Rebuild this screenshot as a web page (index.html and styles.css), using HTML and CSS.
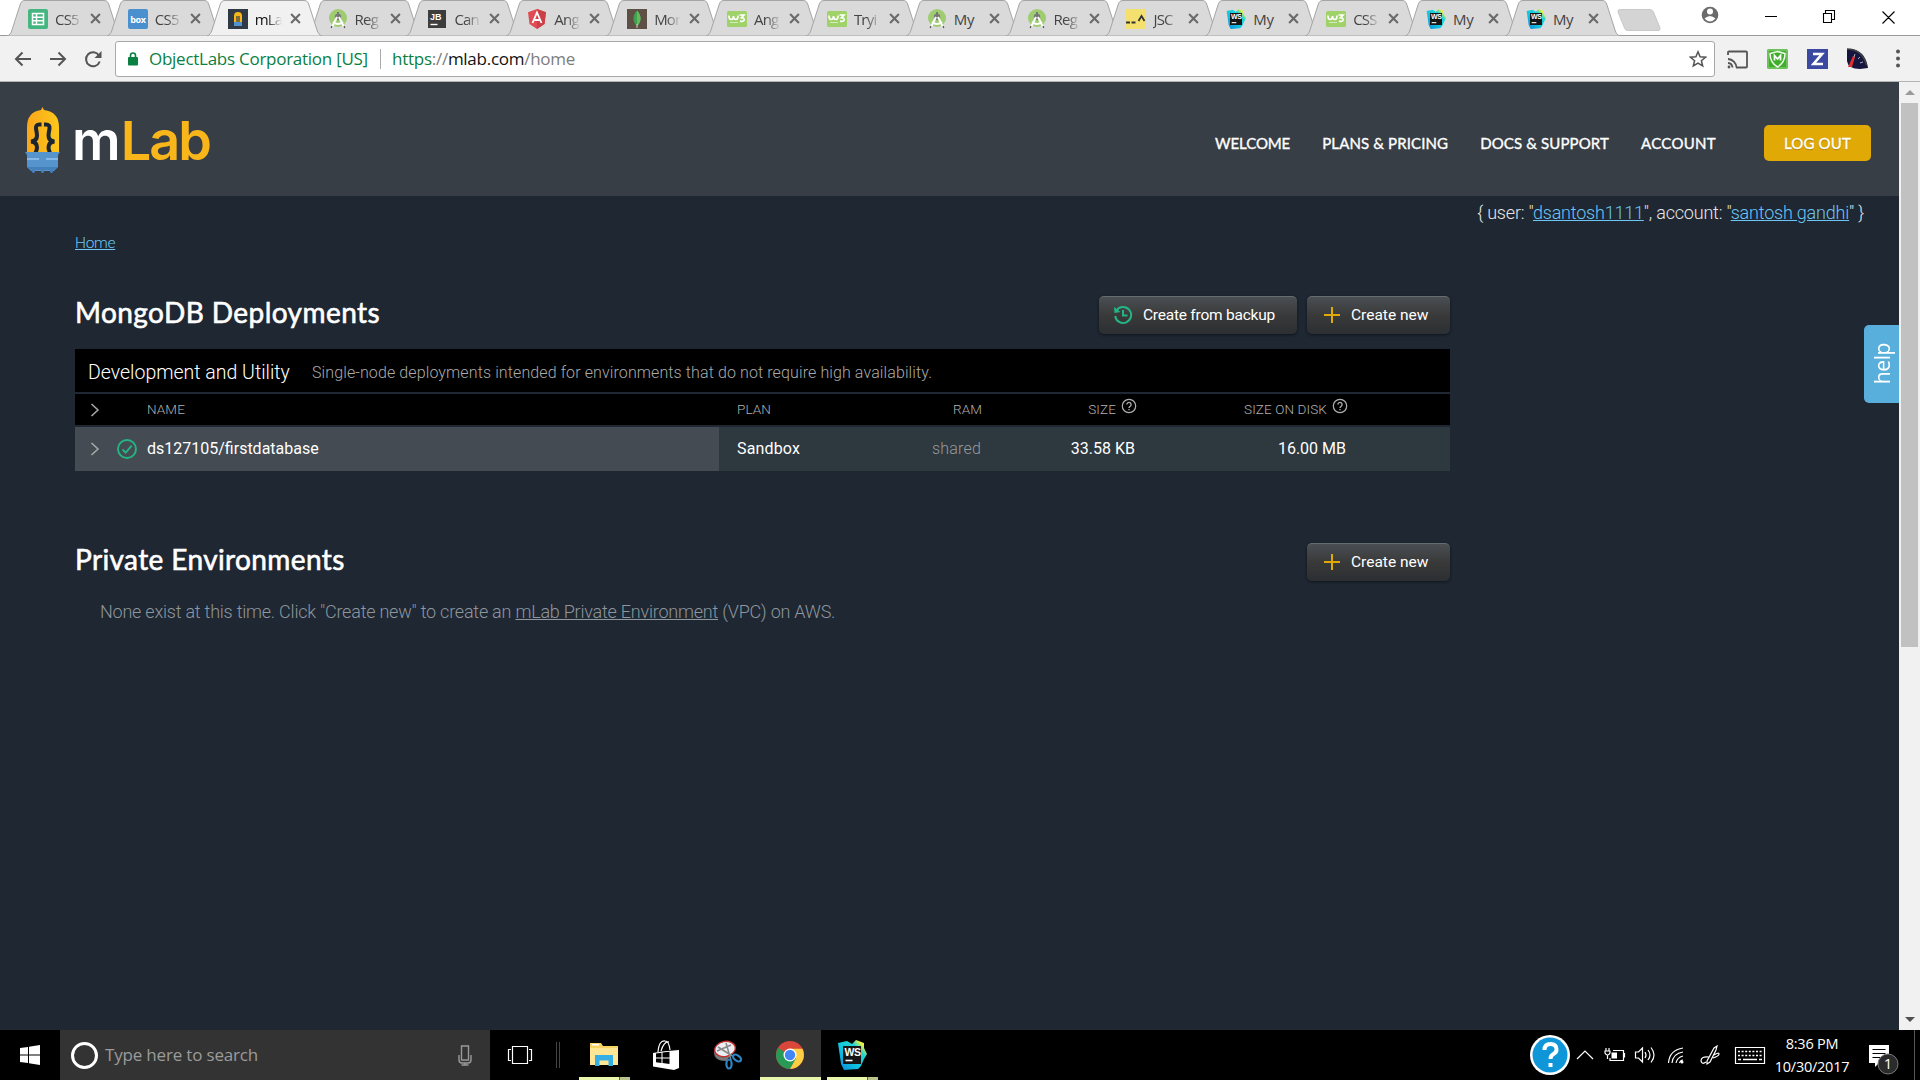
FILE: index.html
```html
<!DOCTYPE html>
<html lang="en">
<head>
<meta charset="utf-8">
<title>mLab</title>
<link rel="stylesheet" href="styles.css">
</head>
<body>
<svg class="defs" width="0" height="0">
  <defs>
    <linearGradient id="bulb" x1="0" x2="1"><stop offset="0" stop-color="#faa61a"/><stop offset="1" stop-color="#fdc81b"/></linearGradient>
    <linearGradient id="wsg" x1="0" y1="1" x2="1" y2="0"><stop offset="0" stop-color="#0a84d8"/><stop offset=".4" stop-color="#0fc4e0"/><stop offset=".7" stop-color="#22d6d4"/><stop offset=".85" stop-color="#f6f13c"/><stop offset="1" stop-color="#22d6d4"/></linearGradient>
    <symbol id="tab" viewBox="0 0 116 36"><path d="M0 36 C3 35 4 33 5 30 L13 5 C14 2 15 .5 18 .5 H97 C100 .5 101 2 102 5 L110 30 C111 33 112 35 115 36Z"/></symbol>
    <symbol id="x" viewBox="0 0 10 10"><path d="M1 1 9 9M9 1 1 9" fill="none" stroke="currentColor" stroke-width="1.9"/></symbol>
    <symbol id="sheets" viewBox="0 0 20 20"><rect width="20" height="20" rx="2" fill="#45b680"/><path d="M4.500 4.500h11v11h-11zM4.500 8.200h11M4.500 11.800h11M8.500 4.500v11" fill="none" stroke="#fff" stroke-width="1.500"/></symbol>
    <symbol id="box" viewBox="0 0 20 20"><rect width="20" height="20" rx="2" fill="#4a90cf"/><text x="10" y="13.500" text-anchor="middle" class="i-box">box</text></symbol>
    <symbol id="mlab" viewBox="0 0 20 20"><rect width="20" height="20" fill="#303a45"/><path d="M6 13V7a4 4 0 0 1 8 0v6z" fill="#f9b61b"/><path d="M9 13V7M11 13V7" stroke="#303a45" stroke-width="1.200"/><path d="M6 13h8v4H6z" fill="#4f93d0"/></symbol>
    <symbol id="studio" viewBox="0 0 20 20"><circle cx="10" cy="9" r="9" fill="#9fcc70"/><circle cx="10" cy="8" r="3.200" fill="#777"/><path d="M10 3v3" stroke="#777" stroke-width="2"/><path d="M9 8 4 18M11 8l5 10M5 13q5 4 10 0" fill="none" stroke="#fff" stroke-width="2"/><path d="M4 17l-.8 2M16 17l.8 2" stroke="#555" stroke-width="1.300"/></symbol>
    <symbol id="jb" viewBox="0 0 20 20"><rect x="1" y="1" width="18" height="18" fill="#3d3d3d"/><text x="3" y="10.500" class="i-jb">JB</text><path d="M3.500 15.500h7" stroke="#fff" stroke-width="1.400"/></symbol>
    <symbol id="ng" viewBox="0 0 20 20"><path d="M10 0 19 3.200 17.500 15 10 20 2.500 15 1 3.200z" fill="#e04a52"/><path d="M10 0 19 3.200 17.500 15 10 20z" fill="#cc3e48"/><path d="M5.500 14 10 3.500 14.500 14M7.500 11h5" fill="none" stroke="#fff" stroke-width="1.800"/></symbol>
    <symbol id="mongo" viewBox="0 0 20 20"><rect width="20" height="20" fill="#5f5045"/><path d="M10 1.500C15 7 14.500 13 10 17 5.500 13 5 7 10 1.500z" fill="#3fa34d"/><path d="M10 1.500C15 7 14.500 13 10 17z" fill="#69b85f"/><path d="M10 15v4" stroke="#ccc"/></symbol>
    <symbol id="w3" viewBox="0 0 20 20"><rect y="2" width="20" height="16" rx="1.500" fill="#a0d26a"/><path d="M2 6.500q0 4 2.200 4t2.300-3.500q.1 3.500 2.300 3.500T11 6.500M12.500 6H17l-2.600 2.700q3 .1 2.800 2.200-.6 2.200-4.200 1.200" fill="none" stroke="#fff" stroke-width="1.700"/><path d="M3 13.500h8" stroke="#d5ebbd"/></symbol>
    <symbol id="jsc" viewBox="0 0 20 20"><rect width="20" height="20" fill="#f4e06e"/><path d="M0 13.500h4M5.500 13.500h4M12.500 12l3-5 3 5" fill="none" stroke="#333" stroke-width="1.800"/></symbol>
    <symbol id="ws" viewBox="0 0 30 30"><path d="M1 3 10 1l5 3 4-4 8 3v5l3 6-3 5-3 7-3 3-14 1-3-6z" fill="url(#wsg)"/><path d="M6 6h18v18H6z" fill="#161616"/><text x="7.500" y="15.500" class="i-ws">WS</text><path d="M8.500 20.500h7" stroke="#fff" stroke-width="1.600"/></symbol>
    <symbol id="q" viewBox="0 0 16 16"><circle cx="8" cy="8" r="6.700" fill="none" stroke="currentColor" stroke-width="1.200"/><path d="M5.900 6.500a2.100 2.100 0 1 1 3.300 1.700Q8 9 8 10M8 11v1.200" fill="none" stroke="currentColor" stroke-width="1.300"/></symbol>
    <symbol id="chev" viewBox="0 0 9 14"><path d="M1 1l6.500 6L1 13" fill="none" stroke="currentColor" stroke-width="1.500"/></symbol>
    <symbol id="plus" viewBox="0 0 18 18"><path d="M9 1v16M1 9h16" stroke="#e1a905" stroke-width="2"/></symbol>
  </defs>
</svg>
<header class="tabs">
  <div class="strip">
    <div class="tab"><svg class="shape"><use href="#tab"/></svg><svg class="fav"><use href="#sheets"/></svg><span>CS5</span><svg class="close"><use href="#x"/></svg></div>
    <div class="tab"><svg class="shape"><use href="#tab"/></svg><svg class="fav"><use href="#box"/></svg><span>CS5</span><svg class="close"><use href="#x"/></svg></div>
    <div class="tab active"><svg class="shape"><use href="#tab"/></svg><svg class="fav"><use href="#mlab"/></svg><span>mLa</span><svg class="close"><use href="#x"/></svg></div>
    <div class="tab"><svg class="shape"><use href="#tab"/></svg><svg class="fav"><use href="#studio"/></svg><span>Reg</span><svg class="close"><use href="#x"/></svg></div>
    <div class="tab"><svg class="shape"><use href="#tab"/></svg><svg class="fav"><use href="#jb"/></svg><span>Can</span><svg class="close"><use href="#x"/></svg></div>
    <div class="tab"><svg class="shape"><use href="#tab"/></svg><svg class="fav"><use href="#ng"/></svg><span>Ang</span><svg class="close"><use href="#x"/></svg></div>
    <div class="tab"><svg class="shape"><use href="#tab"/></svg><svg class="fav"><use href="#mongo"/></svg><span>Mon</span><svg class="close"><use href="#x"/></svg></div>
    <div class="tab"><svg class="shape"><use href="#tab"/></svg><svg class="fav"><use href="#w3"/></svg><span>Ang</span><svg class="close"><use href="#x"/></svg></div>
    <div class="tab"><svg class="shape"><use href="#tab"/></svg><svg class="fav"><use href="#w3"/></svg><span>Tryi</span><svg class="close"><use href="#x"/></svg></div>
    <div class="tab"><svg class="shape"><use href="#tab"/></svg><svg class="fav"><use href="#studio"/></svg><span class="full">My</span><svg class="close"><use href="#x"/></svg></div>
    <div class="tab"><svg class="shape"><use href="#tab"/></svg><svg class="fav"><use href="#studio"/></svg><span>Reg</span><svg class="close"><use href="#x"/></svg></div>
    <div class="tab"><svg class="shape"><use href="#tab"/></svg><svg class="fav"><use href="#jsc"/></svg><span>JSC</span><svg class="close"><use href="#x"/></svg></div>
    <div class="tab"><svg class="shape"><use href="#tab"/></svg><svg class="fav"><use href="#ws"/></svg><span class="full">My</span><svg class="close"><use href="#x"/></svg></div>
    <div class="tab"><svg class="shape"><use href="#tab"/></svg><svg class="fav"><use href="#w3"/></svg><span>CSS</span><svg class="close"><use href="#x"/></svg></div>
    <div class="tab"><svg class="shape"><use href="#tab"/></svg><svg class="fav"><use href="#ws"/></svg><span class="full">My</span><svg class="close"><use href="#x"/></svg></div>
    <div class="tab"><svg class="shape"><use href="#tab"/></svg><svg class="fav"><use href="#ws"/></svg><span class="full">My</span><svg class="close"><use href="#x"/></svg></div>
  </div>
  <svg class="newtab" viewBox="0 0 44 22"><path d="M3 .5H33Q35.500.5 36.500 3L43 19Q43.500 21.500 41 21.500H11Q8.500 21.500 7.500 19L1 3Q.5.500 3 .5Z" fill="#d4d4d4" stroke="#c8c8c8"/></svg>
  <svg class="win" viewBox="0 0 220 30"><circle cx="10" cy="15" r="8.300" fill="#6b6b6b"/><circle cx="10" cy="11.500" r="3" fill="#fff"/><path d="M4.500 18.500q5.500-5 11 0-5.500 6-11 0z" fill="#fff"/><path d="M65 16.500h12M123.500 13.500h8v9h-8zM125.500 13v-2.500h9v9h-2.500M182.500 11.500l12 12M194.500 11.500l-12 12" fill="none" stroke="#000" stroke-width="1.100"/></svg>
</header>
<div class="toolbar">
  <svg class="nav" viewBox="0 0 100 24"><path d="M17 12H2M8.500 5.500 2 12l6.500 6.500M36 12h15M44.500 5.500 51 12l-6.500 6.500M85 8.500a7 7 0 1 0 .7 6" fill="none" stroke="#555" stroke-width="2"/><path d="M87.500 4v7h-7z" fill="#555"/></svg>
  <div class="omni">
    <svg class="lock" viewBox="0 0 12 14"><rect x="1" y="5" width="10" height="8.500" rx="1" fill="#0b8043"/><path d="M3.500 6V3.500a2.500 2.500 0 0 1 5 0V6" fill="none" stroke="#0b8043" stroke-width="1.600"/></svg>
    <span class="org">ObjectLabs Corporation [US]</span>
    <i class="bar"></i>
    <span class="url"><span class="g">https</span>://<span class="k">mlab.com</span>/home</span>
    <svg class="star" viewBox="0 0 18 18"><path d="M9 1.800l2.100 5 5.400.4-4.100 3.500 1.300 5.300L9 13.100 4.300 16l1.300-5.300L1.500 7.200l5.400-.4z" fill="none" stroke="#555" stroke-width="1.500"/></svg>
  </div>
  <svg class="ext" viewBox="0 0 190 24"><path d="M10 20.500h10a1 1 0 0 0 1-1v-14a1 1 0 0 0-1-1H3a1 1 0 0 0-1 1V8M2 12a9 9 0 0 1 8.500 8.500M2 16a5 5 0 0 1 4.500 4.500" fill="none" stroke="#555" stroke-width="1.800"/><circle cx="3" cy="20" r="1.400" fill="#555"/>
    <rect x="41" y="2" width="21" height="20" rx="2" fill="#3fae2a"/><rect x="42" y="3" width="19" height="18" rx="1" fill="none" stroke="#9ad68a"/><path d="M51.500 4.500 59 6.500q0 9-7.500 13.500Q44 15.500 44 6.500z" fill="#3fae2a" stroke="#f2faf0" stroke-width="1.500"/><path d="M48.500 13.500V8.500l3 3.500 3-3.500v5" fill="none" stroke="#fff" stroke-width="1.700"/>
    <rect x="81" y="2" width="21" height="20" fill="#3b4aa0"/><path d="M87 7h9l-8.500 10H97" fill="none" stroke="#fff" stroke-width="2.600"/>
    <path d="M121 2q18-1 21 19l-8 1q-12 0-13-8z" fill="#15153f"/><path d="M121 2q15 0 19.500 16" fill="none" stroke="#444" stroke-width="1.500"/><path d="M122 20l5-11 2 1-3 10z" fill="#e03030"/><path d="M129 7l-1 3M134 10l-2 2M137 15l-3 1" stroke="#aab"/>
    <g fill="#555"><circle cx="172" cy="4.500" r="2"/><circle cx="172" cy="11.500" r="2"/><circle cx="172" cy="18.500" r="2"/></g></svg>
</div>
<div class="view">
  <main class="page">
    <div class="head">
      <svg class="bulb" viewBox="0 0 36 68"><path d="M2 46V20Q2 5 16 3l1.500-3L19 3q15 2 15 17v26z" fill="url(#bulb)"/><path d="M16.500 17.500h-2q-4 0-3.500 4 .8 4 1 7 0 5.500-6 6 6 .5 6 6 0 2-1.500 5.500M19 17.500h2q4 0 3.500 4-.8 4-1 7 0 5.500 6 6-6 .5-6 6 0 2 1.500 5.500" fill="none" stroke="#1b2631" stroke-width="4"/><path d="M0 45h35l-2 3v12l-4 4H6l-4-4V48z" fill="#5594cc"/><path d="M2 60h31l-4 3h-1v2q-1.500 2-3 0v-2h-6v2q-1.500 2-3 0v-2h-6v2q-1.500 2-3 0v-2H6z" fill="#4580bb"/><path d="M2 52h12M21 52h12" stroke="#87b9e6" stroke-width="2"/></svg>
      <div class="logo"><span>m</span><b>Lab</b></div>
      <nav><a class="n1">WELCOME</a><a>PLANS &amp; PRICING</a><a>DOCS &amp; SUPPORT</a><a class="n4">ACCOUNT</a></nav>
      <a class="logout">LOG OUT</a>
    </div>
    <div class="who"><span>{ user: "<a>dsantosh1111</a>", account: "<a>santosh gandhi</a>" }</span></div>
    <div class="body">
      <div class="crumb"><a>Home</a></div>
      <div class="title first"><h1>MongoDB Deployments</h1>
        <button class="btn bk"><svg viewBox="0 0 20 20"><path d="M3.500 5.500a8 8 0 1 1-1.300 5.500M10 5v5.500h4.500" fill="none" stroke="#23b684" stroke-width="2"/><path d="M1 2l.5 6 6-1z" fill="#23b684"/></svg><span>Create from backup</span></button>
        <button class="btn"><svg viewBox="0 0 18 18"><use href="#plus"/></svg><span>Create new</span></button></div>
      <section class="table">
        <div class="cap"><span class="t1">Development and Utility</span><span class="t2">Single-node deployments intended for environments that do not require high availability.</span></div>
        <div class="row th"><div class="name"><svg class="chev"><use href="#chev"/></svg><i class="ok"></i><span>NAME</span></div><div class="plan"><span>PLAN</span></div><div class="r"><span>RAM</span></div><div class="r"><span>SIZE</span><svg class="q"><use href="#q"/></svg></div><div class="r"><span>SIZE ON DISK</span><svg class="q"><use href="#q"/></svg></div></div>
        <div class="row td"><div class="name"><svg class="chev"><use href="#chev"/></svg><svg class="ok" viewBox="0 0 20 20"><circle cx="10" cy="10" r="9" fill="none" stroke="#23b684" stroke-width="1.900"/><path d="M5.500 10.500l3.200 3.200 6-7" fill="none" stroke="#23b684" stroke-width="1.900"/></svg><span>ds127105/firstdatabase</span></div><div class="plan"><span>Sandbox</span></div><div class="r dim"><span>shared</span></div><div class="r"><span>33.58 KB</span></div><div class="r"><span>16.00 MB</span></div></div>
      </section>
      <div class="title second"><h1>Private Environments</h1>
        <button class="btn"><svg viewBox="0 0 18 18"><use href="#plus"/></svg><span>Create new</span></button></div>
      <p class="none"><span>None exist at this time. Click "Create new" to create an <a>mLab Private Environment</a> (VPC) on AWS.</span></p>
    </div>
    <div class="help"><span>help</span></div>
  </main>
  <div class="scroll"><i class="up"></i><i class="thumb"></i><i class="down"></i></div>
</div>
<footer class="task">
  <svg class="start" viewBox="0 0 20 20"><path d="M0 3l8-1.100V9.500H0zM9 1.700 20 0v9.500H9zM0 10.500h8v7.600L0 17zM9 10.500h11V20L9 18.300z" fill="#fff"/></svg>
  <div class="search"><i class="cortana"></i><span>Type here to search</span><svg viewBox="0 0 14 21"><path d="M3.500 1h7v14h-7zM1 10v5q0 3 3 3h6q3 0 3-3v-5M7 18v2M3.500 20h7" fill="none" stroke="#999" stroke-width="1.400"/></svg></div>
  <svg class="apps" viewBox="490 1030 400 50">
    <path d="M512.500 1046.500h15v17h-15zM511 1049.500h-2.500v11h2.500M529 1049.500h2.500v11H529" fill="none" stroke="#fff" stroke-width="1.200"/>
    <path d="M556.500 1042v26M559.500 1042v26" stroke="#444"/>
    <path d="M590 1043h11l2 3h15v19h-28z" fill="#f8d364"/><path d="M590 1048h28v17h-28z" fill="#ffe694"/><path d="M592 1044h7v1.500h-7z" fill="#fff"/><path d="M595 1066v-11h18v11h-4.500v-5.500h-9v5.500z" fill="#35ade5"/>
    <path d="M653 1053l9-1.500 17-1.500v18l-5 2-21-3.500z" fill="#fff"/><path d="M658 1052q1-12 7-11 4 0 5 9M661 1051q3-10 8-9" fill="none" stroke="#fff" stroke-width="1.200"/><path d="M656 1053.500l5.500-.7v4.700H656zM662.500 1052.600l7-.8v5.700h-7zM656 1058.500h5.500v4.500l-5.500-.7zM662.500 1058.500h7v5.400l-7-.8z" fill="#000"/>
    <path d="M714 1052q0 9 12 9l6-7z" fill="#777"/><ellipse cx="725" cy="1049" rx="10.500" ry="7.500" fill="#eceef4" stroke="#c0302c" stroke-width="1.400" transform="rotate(-12 725 1049)"/><path d="M718 1047l16 10M726 1043l5 17M717 1051l14-6" stroke="#888" stroke-width="1.500"/><g fill="none" stroke="#2e86c6" stroke-width="2.200"><ellipse cx="729" cy="1064" rx="2.600" ry="4.500"/><ellipse cx="737" cy="1058" rx="4.500" ry="2.600" transform="rotate(35 737 1058)"/></g>
    <path d="M760 1030h61v50h-61z" fill="#333"/>
    <circle cx="790" cy="1055" r="14" fill="#d8473a"/><path d="M777.900 1048A14 14 0 0 0 790 1069l6.500-10.500-6.500-3.500z" fill="#279b56"/><path d="M777.900 1048l6 11 6 3z" fill="#279b56"/><path d="M790 1069A14 14 0 0 0 802.500 1048.800H790l6 9.500z" fill="#fcce44"/><circle cx="790" cy="1055" r="6.500" fill="#fff"/><circle cx="790" cy="1055" r="5.200" fill="#4285f4"/>
    <svg x="837" y="1040" width="30" height="30"><use href="#ws"/></svg>
    <path d="M579 1077h40v3h-40zM760 1077h61v3h-61zM827 1077h40v3h-40z" fill="#e9f7ad"/><path d="M619.500 1077H630v3h-10.500zM867.500 1077H878v3h-10.500z" fill="#b9c38b"/>
  </svg>
  <svg class="tray" viewBox="1528 1030 240 50">
    <circle cx="1550" cy="1055" r="20" fill="#fff"/><circle cx="1550" cy="1055" r="17.500" fill="#0f96d8"/><path d="M1544.500 1050q0-6 6-6t6 5.500q0 3-3 4.500t-3 5M1550.500 1063v4" fill="none" stroke="#fff" stroke-width="4"/>
    <g fill="none" stroke="#fff" stroke-width="1.200"><path d="M1577 1059l8-8 8 8"/><path d="M1613 1050.500h10.500v10H1610v-2.500M1624.500 1053v4.500M1606 1048v3M1609 1048v3M1605 1051h5v2q-1 2-2.500 2t-2.500-2zM1607.500 1055v4"/><path d="M1635.500 1052h3l4-4v14l-4-4h-3zM1645 1052q2 3 0 6M1648 1050q4 5 0 10M1651 1047.500q6 7.500 0 15"/><path d="M1668.500 1063q1-13 14.500-15M1672 1063q1-9.500 11-11M1676 1063q1-5.500 7-7M1679.500 1063q1-3 3.500-3"/><path d="M1707 1061l7-13 3-2-1 4-6 12-3 2zM1709 1057q-8-1-8 4 1 4 5 1M1714 1055q5-3 5-1t-6 4"/><path d="M1735.500 1047.500h29v16h-29z"/></g><circle cx="1682" cy="1062" r="1.500" fill="#fff"/><path d="M1611.500 1052.500h5.500v6h-5.500z" fill="#fff"/><path d="M1738 1051.500h24M1738 1055.500h24" stroke="#fff" stroke-width="1.300" stroke-dasharray="2 1.600"/><path d="M1738 1059.500h3M1743 1059.500h14M1759 1059.500h3" stroke="#fff" stroke-width="1.300"/>
  </svg>
  <div class="clock"><span>8:36 PM</span><span>10/30/2017</span></div>
  <svg class="action" viewBox="1865 1030 55 50"><path d="M1869 1045h20v18h-10l-4 4v-4h-6z" fill="#fff"/><path d="M1872.500 1049.500h13M1872.500 1053.500h13M1872.500 1057.500h13" stroke="#000" stroke-width="1.200"/><circle cx="1888" cy="1064" r="10" fill="#2b2b2b" stroke="#777"/><text x="1888" y="1069" text-anchor="middle" class="i-n">1</text><path d="M1914.500 1030v50" stroke="#555"/></svg>
</footer>
</body>
</html>
```

FILE: styles.css
```css
* { box-sizing: border-box; }
body { margin: 0; width: 1920px; height: 1080px; overflow: hidden; display: flex; flex-direction: column; background: #1e2732; font-family: Roboto, sans-serif; }
.defs { position: absolute; }
svg { display: block; flex: none; }
span, a, button, h1 { white-space: nowrap; }
.i-box { font: 700 9px "Open Sans", sans-serif; fill: #fff; letter-spacing: -.3px; }
.i-jb { font: 700 9px "Liberation Sans", sans-serif; fill: #fff; }
.i-ws { font: 700 10.500px "Liberation Sans", sans-serif; fill: #fff; letter-spacing: -.5px; }
.i-n { font: 15px "Open Sans", sans-serif; fill: #fff; }

/* browser tabs and toolbar */
.tabs { flex: none; height: 36px; display: flex; align-items: flex-start; background: #fff; border-bottom: 1px solid #999; }
.strip { display: flex; width: 1617px; padding-left: 7px; }
.tab { flex: none; position: relative; width: 99.870px; height: 36px; display: flex; align-items: center; padding: 2px 0 0 21px; color: #444; }
.shape { position: absolute; left: 0; top: 0; width: 116px; height: 36px; fill: #dadada; stroke: #a5a5a5; }
.active { z-index: 1; color: #111; }
.active .shape { fill: #f1f1f1; }
.fav { position: relative; width: 20px; height: 20px; }
.tab span { position: relative; width: 30px; margin-left: 7px; font: 15px/22px "Open Sans", sans-serif; letter-spacing: -.8px; mask-image: linear-gradient(90deg, #000 40%, transparent 90%); }
.tab .full { mask-image: none; letter-spacing: -.3px; }
.close { position: relative; width: 11px; height: 11px; margin: -1px 0 0 5px; color: #6a6a6a; }
.newtab { width: 44px; height: 22px; margin-top: 9px; }
.win { width: 220px; height: 30px; margin-left: 39px; }
.toolbar { flex: none; height: 46px; display: flex; align-items: center; background: #f1f1f1; border-bottom: 1px solid #b3b3b3; }
.nav { width: 100px; height: 24px; margin-left: 14px; }
.omni { width: 1600px; height: 36px; margin-left: 1px; display: flex; align-items: center; background: #fff; border: 1px solid #a9a9a9; border-radius: 3px; font: 17px/24px "Open Sans", sans-serif; letter-spacing: -.265px; color: #7d7d7d; }
.lock { width: 12px; height: 14px; margin: 0 10px 0 11px; }
.org { width: 231px; color: #0b8043; }
.bar { width: 1px; height: 20px; background: #aaa; margin-right: 11px; }
.g { color: #0b8043; }
.k { color: #111; }
.star { width: 18px; height: 18px; margin-left: auto; margin-right: 7px; }
.ext { width: 190px; height: 24px; margin-left: 11px; }

/* mLab page */
.view { flex: none; height: 948px; display: flex; }
.page { position: relative; width: 1899px; }
.head { height: 114px; display: flex; align-items: center; background: #373e45; padding: 8px 28px 0 25px; }
.bulb { width: 36px; height: 68px; margin-top: -5px; }
.logo { margin: -4px 0 0 11px; font: 600 54px/60px Inter, sans-serif; color: #fff; letter-spacing: -2px; }
.logo b { color: #f9b61b; font-weight: 600; margin-left: 2px; }
nav { margin-left: auto; display: flex; gap: 32px; font: 400 15px/20px Lato, sans-serif; color: #fff; -webkit-text-stroke: .35px #fff; letter-spacing: .13px; }
.n1 { letter-spacing: -.1px; }
.n4 { letter-spacing: .3px; }
.logout { width: 107px; height: 36px; margin-left: 48px; display: flex; align-items: center; justify-content: center; background: #e1a905; border-radius: 5px; color: #fff; font: 400 15px/20px Lato, sans-serif; -webkit-text-stroke: .35px #fff; letter-spacing: .15px; text-shadow: 0 1px 1px rgba(0,0,0,.3); }
.who { display: flex; justify-content: flex-end; padding: 4px 35px 0 0; font: 300 18px/26px Roboto, sans-serif; letter-spacing: -.205px; color: #e6e6e6; }
.who a, .crumb a { color: #6cc5f5; text-decoration: underline; }
.body { width: 1375px; margin-left: 75px; }
.crumb { font: 300 15.500px/20px Roboto, sans-serif; letter-spacing: -.3px; padding-top: 7px; }
.title { display: flex; align-items: center; gap: 10px; height: 38px; }
.first { margin-top: 43px; }
.second { margin-top: 72px; }
h1 { flex: 1; margin: -6px 0 0; font: 400 28px/38px Lato, sans-serif; color: #fff; -webkit-text-stroke: .6px #fff; letter-spacing: .43px; }
.second h1 { letter-spacing: .38px; }
.btn { height: 38px; width: 143px; display: flex; align-items: center; gap: 10px; padding: 0 0 1px 16px; border: 0; border-top: 1px solid #666c70; border-radius: 5px; background: linear-gradient(#4a4f53, #393939 50%, #2b2f33); color: #fff; font: 400 15.500px/20px Roboto, sans-serif; box-shadow: 0 1px 3px rgba(0,0,0,.5); }
.btn svg { width: 18px; height: 18px; }
.bk { width: 198px; padding-left: 14px; letter-spacing: -.23px; }
.bk svg { width: 20px; height: 20px; }
.table { margin-top: 15px; display: flex; flex-direction: column; gap: 2px; }
.cap { height: 43px; display: flex; align-items: center; background: #000; padding: 3px 0 0 13px; color: #fff; }
.t1 { width: 224px; font-size: 19.500px; font-weight: 300; }
.t2 { font-size: 16px; font-weight: 300; color: #aaa; letter-spacing: .108px; }
.row { display: grid; grid-template-columns: 644px 140px 123px 154px 211px; }
.row span { margin-top: -2px; }
.th { height: 31px; background: #000; font-size: 13.500px; font-weight: 300; color: #b0b0b0; letter-spacing: .11px; }
.td { height: 44px; background: #2e383f; font-size: 16px; color: #fff; }
.name { display: flex; align-items: center; padding-left: 15px; }
.td .name { background: #444b52; }
.chev { width: 10px; height: 14px; color: #aaa; }
.ok { width: 20px; height: 20px; margin: -1px 10px 0 17px; }
.plan { display: flex; align-items: center; padding-left: 18px; }
.td .plan { letter-spacing: .15px; }
.r { display: flex; align-items: center; justify-content: flex-end; }
.td .r { padding-right: 1px; }
.td .dim { color: #999; font-weight: 300; letter-spacing: .18px; }
.q { width: 16px; height: 16px; margin: -7px -1px 0 5px; }
.none { margin: 18px 0 0; padding-left: 25px; font: 300 18px/26px Roboto, sans-serif; letter-spacing: -.225px; color: #8e969e; }
.none a { text-decoration: underline; }
.help { position: absolute; right: 0; top: 243px; width: 35px; height: 78px; background: #59afdc; border-radius: 5px 0 0 5px; display: flex; align-items: center; justify-content: center; color: #fff; font: 21px/30px "Open Sans", sans-serif; letter-spacing: -.4px; }
.help span { writing-mode: vertical-rl; transform: rotate(180deg); }
.scroll { width: 21px; background: #f1f1f1; display: flex; flex-direction: column; align-items: center; }
.up { margin-top: 8px; border: 5px solid transparent; border-top: 0; border-bottom: 5px solid #999; }
.thumb { width: 17px; height: 544px; margin-top: 8px; background: #c1c1c1; }
.down { margin-top: auto; margin-bottom: 8px; border: 5px solid transparent; border-bottom: 0; border-top: 5px solid #505050; }

/* taskbar */
.task { flex: none; height: 50px; display: flex; align-items: center; background: #000; }
.start { width: 20px; height: 20px; margin: 0 20px; }
.search { width: 430px; height: 50px; display: flex; align-items: center; background: #333; color: #9b9b9b; font: 17px/24px "Open Sans", sans-serif; letter-spacing: -.18px; padding: 0 18px 0 11px; }
.cortana { width: 27px; height: 27px; border: 3.500px solid #fff; border-radius: 50%; margin-right: 7px; }
.search svg { width: 14px; height: 21px; margin-left: auto; }
.apps { width: 400px; height: 50px; }
.tray { width: 240px; height: 50px; margin-left: 638px; }
.clock { width: 88px; height: 50px; padding-top: 2px; display: flex; flex-direction: column; align-items: center; color: #fff; font: 14.500px/23px "Open Sans", sans-serif; letter-spacing: -.25px; }
.action { width: 55px; height: 50px; margin-left: 9px; }
```
